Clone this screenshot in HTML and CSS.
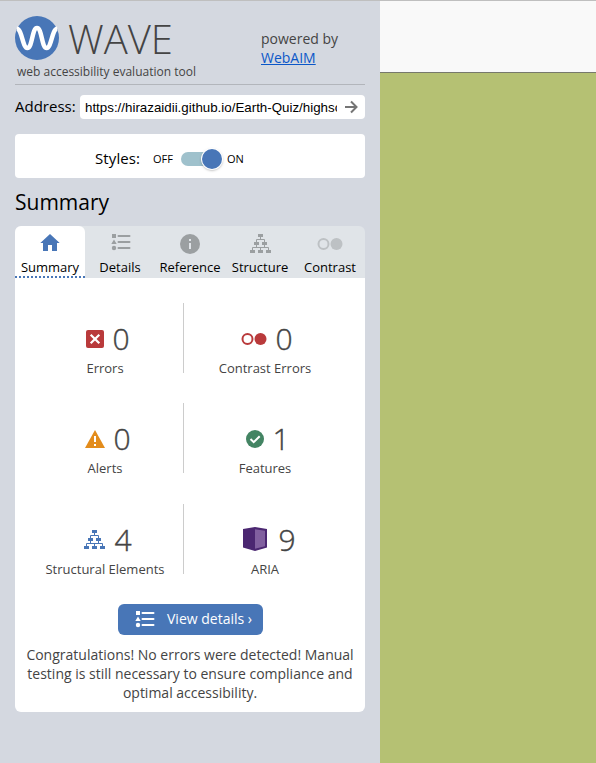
FILE: index.html
```html
<!DOCTYPE html>
<html lang="en">
<head>
<meta charset="utf-8">
<title>WAVE</title>
<link rel="stylesheet" href="styles.css">
</head>
<body>
<svg class="defs" width="0" height="0" aria-hidden="true">
  <symbol id="tree" viewBox="0 0 22 20">
    <path d="M8 0h5v3H8zM4 8h5v3H4zM12 8h5v3h-5zM0 16h5v3H0zM8 16h5v3H8zM16 16h5v3h-5z" fill="currentColor"/>
    <path d="M10.500 3v2.500M6.500 8V5.500h8V8M6.500 11v2.500M14.500 11v2.500M2.500 16v-2.500h16V16M10.500 13.500V16" fill="none" stroke="currentColor"/>
  </symbol>
  <symbol id="list" viewBox="0 0 20 17">
    <path d="M1 0h4v4H1zM3 5.500l2.700 4.500H.3z" fill="currentColor"/>
    <circle cx="3" cy="14" r="2.200" fill="currentColor"/>
    <path d="M7.500 2h11M7.500 8h11M7.500 14h11" stroke="currentColor" stroke-width="2" stroke-linecap="round"/>
  </symbol>
  <symbol id="circles" viewBox="0 0 26 14">
    <circle cx="6.500" cy="7" r="5" fill="none" stroke="currentColor" stroke-width="2"/>
    <circle cx="19.500" cy="7" r="6" fill="currentColor"/>
  </symbol>
</svg>
<div class="app">
  <aside class="sidebar">
    <header class="header">
      <div class="brand">
        <div class="brand-row">
          <svg width="44" height="44" viewBox="0 0 44 44">
            <circle cx="22" cy="22" r="22" fill="#4876b7"/>
            <path d="M1.800 12.800C7 13 7.500 32 12.300 32C17.500 32 17 12 22 12C27 12 26.500 32 31.700 32C36.500 32 37 13 42.200 12.800" fill="none" stroke="#fff" stroke-width="4.500"/>
          </svg>
          <span class="name">WAVE</span>
        </div>
        <div class="tagline">web accessibility evaluation tool</div>
      </div>
      <div class="powered">powered by<br><a href="#">WebAIM</a></div>
    </header>
    <div class="address">
      <span class="address-label">Address:</span>
      <div class="field"><span class="url">https://hirazaidii.github.io/Earth-Quiz/highscores.html</span>
        <svg width="14" height="14" viewBox="0 0 14 14"><path d="M1 7h11M7 1.500L12.500 7 7 12.500" fill="none" stroke="#757575" stroke-width="2"/></svg>
      </div>
    </div>
    <div class="styles">
      <span class="styles-label">Styles:</span><span class="off">OFF</span>
      <span class="switch"><span class="knob"></span></span><span class="on">ON</span>
    </div>
    <h2>Summary</h2>
    <nav class="tabs">
      <div class="tab active"><span class="icon"><svg width="20" height="18" viewBox="0 0 20 18"><path d="M10 0l9.700 9H17v8h-5v-6H8v6H3V9H.3z" fill="#4876b7"/></svg></span>Summary</div>
      <div class="tab details"><span class="icon"><svg width="20" height="17"><use href="#list"/></svg></span>Details</div>
      <div class="tab"><span class="icon"><svg width="20" height="20" viewBox="0 0 20 20"><circle cx="10" cy="10" r="10" fill="currentColor"/><path d="M9 5h2v2H9zM9 9h2v6H9z" fill="#e0e4e8"/></svg></span>Reference</div>
      <div class="tab shift"><span class="icon"><svg width="22" height="20"><use href="#tree"/></svg></span>Structure</div>
      <div class="tab contrast"><span class="icon"><svg width="26" height="14"><use href="#circles"/></svg></span>Contrast</div>
    </nav>
    <main class="panel">
      <div class="stats">
        <div class="stat left"><div class="value"><svg width="18" height="18" viewBox="0 0 18 18"><rect width="18" height="18" rx="2" fill="#b93a3b"/><path d="M4.700 4.700l8.600 8.600M13.300 4.700l-8.600 8.600" stroke="#fff" stroke-width="2.200"/></svg><b>0</b></div>Errors</div>
        <div class="stat"><div class="value red"><svg width="26" height="14"><use href="#circles"/></svg><b>0</b></div>Contrast Errors</div>
        <div class="stat left"><div class="value"><svg width="20" height="18" viewBox="0 0 20 18"><path d="M10 0l10 18H0z" fill="#e38c1b"/><path d="M9 6h2v6H9zM9 14h2v2H9z" fill="#fff"/></svg><b>0</b></div>Alerts</div>
        <div class="stat"><div class="value"><svg width="18" height="18" viewBox="0 0 18 18"><circle cx="9" cy="9" r="9" fill="#438463"/><path d="M4.500 9l3.200 3.200 6-6" fill="none" stroke="#fff" stroke-width="2"/></svg><b>1</b></div>Features</div>
        <div class="stat left"><div class="value blue"><svg width="22" height="20"><use href="#tree"/></svg><b>4</b></div>Structural Elements</div>
        <div class="stat"><div class="value aria"><svg width="24" height="24" viewBox="0 0 24 24"><path d="M0 2L12 0l12 2v18.500L12 24 0 20.500z" fill="#4b2771"/><path d="M12 2.300l10 1.500v15.500L12 21.700z" fill="#81609f"/></svg><b>9</b></div>ARIA</div>
      </div>
      <div class="button"><svg width="20" height="17"><use href="#list"/></svg><span>View details ›</span></div>
      <p class="message">Congratulations! No errors were detected! Manual<br>testing is still necessary to ensure compliance and<br>optimal accessibility.</p>
    </main>
  </aside>
  <div class="page"><div class="page-bar"></div></div>
</div>
</body>
</html>
```
FILE: styles.css
```css
* { box-sizing: border-box; }
body { margin: 0; font-family: "Open Sans", sans-serif; color: #000; overflow: hidden; }
svg { display: block; flex: none; }
.defs { position: absolute; }
.app { display: flex; height: 763px; border-top: 1px solid #bfbfbf; }
.sidebar { width: 380px; padding: 0 15px; background: #d4d8e0; flex: none; }
.page { flex: 1; background: #b5c173; }
.page-bar { height: 72px; background: #f9f9f9; border-bottom: 1px solid #77796c; }

.header { height: 84px; border-bottom: 1px solid #b2b5bb; display: flex; color: #444; }
.brand { width: 246px; padding-top: 15px; }
.brand-row { display: flex; align-items: center; height: 44px; }
.name { font-size: 40px; font-weight: 300; margin-left: 9px; line-height: 40px; padding-top: 2px; }
.tagline { font-size: 12px; line-height: 16px; margin: 4px 0 0 2px; white-space: nowrap; }
.powered { font-size: 14px; line-height: 19px; padding-top: 28px; }
.powered a { color: #0b57c8; }

.address { display: flex; align-items: center; height: 24px; margin-top: 10px; }
.address-label { width: 65px; font-size: 15px; line-height: 20px; padding-bottom: 2px; }
.field { flex: 1; height: 24px; display: flex; align-items: center; justify-content: space-between; background: #fff; border-radius: 4px; padding: 0 7px 0 5px; min-width: 0; }
.url { width: 252px; overflow: hidden; white-space: nowrap; font: 13.333px/18px "Liberation Sans", sans-serif; padding-top: 1px; }

.styles { display: flex; align-items: center; height: 44px; margin-top: 15px; padding: 5px 0 0 80px; background: #fff; border-radius: 4px; }
.styles-label { width: 58px; font-size: 15px; line-height: 20px; padding-bottom: 2px; letter-spacing: .1px; }
.off { width: 28px; font-size: 11px; }
.on { font-size: 11px; margin-left: 5px; }
.switch { width: 41px; height: 14px; border-radius: 7px; background: #9fc1cc; display: flex; align-items: center; justify-content: flex-end; }
.knob { width: 20px; height: 20px; flex: none; border-radius: 50%; background: #4876b7; box-shadow: 0 0 0 1px #fff, 0 1px 3px rgba(0,0,0,.5); }

h2 { margin: 8px 0; height: 32px; line-height: 32px; font-size: 21px; font-weight: 400; }
.tabs { display: flex; height: 52px; background: #e0e4e8; border-radius: 6px 6px 0 0; }
.tab { width: 70px; display: flex; flex-direction: column; align-items: center; font-size: 13px; line-height: 18px; border-radius: 6px 6px 0 0; }
.tab.active { background: #fff linear-gradient(90deg, #4876b7 50%, transparent 50%) 0 100% / 4px 2px repeat-x; }
.icon { height: 32px; padding-top: 8px; color: #9b9fa1; }
.shift .icon, .details .icon { padding-left: 1px; }
.shift .icon { padding-left: 2px; }
.contrast .icon { padding-top: 11px; color: #bdc1c4; }

.panel { height: 434px; padding: 25px 10px 0; background: #fff; border-radius: 0 0 6px 6px; color: #444; }
.stats { display: grid; grid-template-columns: 160px 160px; grid-template-rows: 100px 101px 101px; }
.stat { height: 70px; width: 160px; text-align: center; font-size: 13px; line-height: 18px; padding-top: 17px; }
.stat.left { background: linear-gradient(#ccc, #ccc) 158px 0 / 1px 70px no-repeat; }
.value { height: 38px; margin-bottom: 1px; display: flex; align-items: center; justify-content: center; gap: 8px; margin-left: 6px; }
.value b { font-size: 30px; line-height: 38px; font-weight: 300; -webkit-text-stroke: .4px #444; }
.red { color: #b93a3b; margin-left: 4px; }
.blue { color: #4876b7; }
.red b, .blue b { color: #444; }
.aria { gap: 11px; margin-left: 9px; }
.aria svg { margin-bottom: 2px; }
.button { width: 145px; height: 31px; margin: -1px 0 0 93px; display: flex; align-items: center; padding-left: 17px; gap: 12px; background: #4876b7; border-radius: 6px; color: #fff; font-size: 14px; white-space: nowrap; }
.button span { line-height: 19px; padding-bottom: 2px; }
.message { margin: 10px -10px 0; text-align: center; font-size: 14px; line-height: 19px; white-space: nowrap; }
```
